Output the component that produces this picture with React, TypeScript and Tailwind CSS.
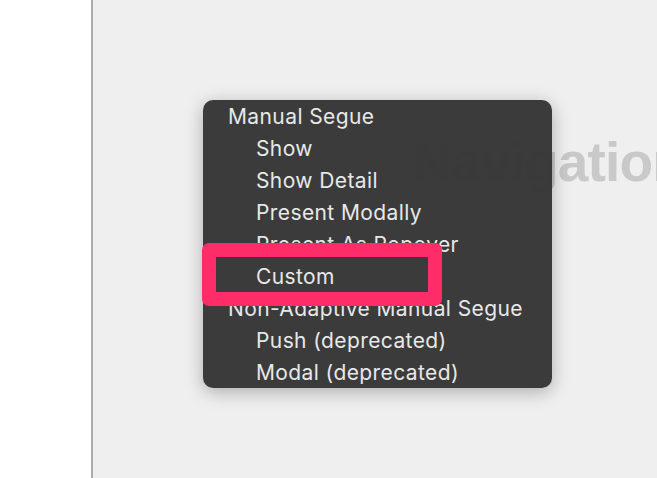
const items: { label: string; header?: boolean }[] = [
  { label: "Manual Segue", header: true },
  { label: "Show" },
  { label: "Show Detail" },
  { label: "Present Modally" },
  { label: "Present As Popover" },
  { label: "Custom" },
  { label: "Non-Adaptive Manual Segue", header: true },
  { label: "Push (deprecated)" },
  { label: "Modal (deprecated)" },
];

export default function App() {
  return (
    <div className="flex h-[478px] w-[657px] overflow-hidden bg-white">
      {/* Left sidebar */}
      <div className="w-[91px] shrink-0 bg-white" />
      <div className="w-[2px] shrink-0 bg-[#acacac]" />

      {/* Canvas */}
      <div className="relative flex-1 overflow-hidden bg-[#efefef]">
        <div
          className="absolute top-[135px] left-[319px] text-[55px] leading-none font-bold tracking-[-0.8px] whitespace-nowrap text-[#c9c9c9]"
          style={{ fontFamily: '"Liberation Sans", Arial, sans-serif' }}
        >
          Navigation
        </div>

        {/* Context menu */}
        <div
          className="absolute top-[100px] left-[110px] w-[349px] overflow-hidden rounded-[10px] bg-[#353535]/[0.97] shadow-[0_4px_18px_rgba(0,0,0,0.28)]"
          style={{ fontFamily: 'Inter, "Noto Sans", sans-serif' }}
        >
          {items.map((item) => (
            <div
              key={item.label}
              className={`flex h-8 items-center pt-[2px] text-[21px] tracking-[0.4px] text-[#e8e8e8] ${
                item.header ? "pl-[25px]" : "pl-[53px]"
              }`}
            >
              {item.label}
            </div>
          ))}
        </div>

        {/* Highlight box */}
        <div className="absolute top-[243px] left-[109px] h-[63px] w-[240px] rounded-[7px] border-[14px] border-[#ff2c6a]" />
      </div>
    </div>
  );
}
